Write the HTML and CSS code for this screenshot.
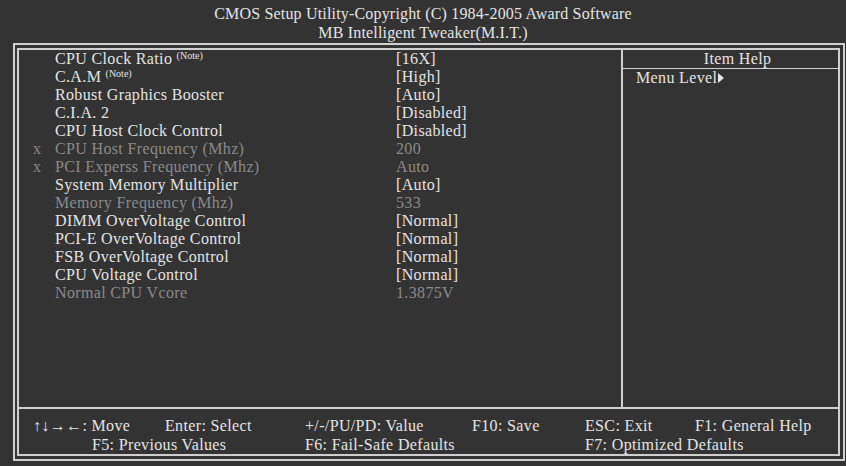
FILE: index.html
```html
<!DOCTYPE html>
<html>
<head>
<meta charset="utf-8">
<link rel="stylesheet" href="styles.css">
</head>
<body>
<div class="screen">
  <div class="header">
    <div>CMOS Setup Utility-Copyright (C) 1984-2005 Award Software</div>
    <div>MB Intelligent Tweaker(M.I.T.)</div>
  </div>
  <div class="outer">
    <div class="inner">
      <div class="main">
        <div class="items">
          <span class="mark"></span><span class="label">CPU Clock Ratio <sup>(Note)</sup></span><span class="value">[16X]</span>
          <span class="mark"></span><span class="label">C.A.M <sup>(Note)</sup></span><span class="value">[High]</span>
          <span class="mark"></span><span class="label">Robust Graphics Booster</span><span class="value">[Auto]</span>
          <span class="mark"></span><span class="label">C.I.A. 2</span><span class="value">[Disabled]</span>
          <span class="mark"></span><span class="label">CPU Host Clock Control</span><span class="value">[Disabled]</span>
          <span class="mark dim">x</span><span class="label dim">CPU Host Frequency (Mhz)</span><span class="value dim">200</span>
          <span class="mark dim">x</span><span class="label dim">PCI Experss Frequency (Mhz)</span><span class="value dim">Auto</span>
          <span class="mark"></span><span class="label">System Memory Multiplier</span><span class="value">[Auto]</span>
          <span class="mark"></span><span class="label dim">Memory Frequency (Mhz)</span><span class="value dim">533</span>
          <span class="mark"></span><span class="label">DIMM OverVoltage Control</span><span class="value">[Normal]</span>
          <span class="mark"></span><span class="label">PCI-E OverVoltage Control</span><span class="value">[Normal]</span>
          <span class="mark"></span><span class="label">FSB OverVoltage Control</span><span class="value">[Normal]</span>
          <span class="mark"></span><span class="label">CPU Voltage Control</span><span class="value">[Normal]</span>
          <span class="mark"></span><span class="label dim">Normal CPU Vcore</span><span class="value dim">1.3875V</span>
        </div>
        <div class="help">
          <div class="help-title">Item Help</div>
          <div class="help-body">Menu Level<svg class="tri" width="6" height="10" viewBox="0 0 6 10"><path d="M0 0 L6 5 L0 10 Z" fill="#e4e4e4"/></svg></div>
        </div>
      </div>
      <div class="footer">
        <span>↑↓→←: Move</span>
        <span>Enter: Select</span>
        <span>+/-/PU/PD: Value</span>
        <span>F10: Save</span>
        <span>ESC: Exit</span>
        <span>F1: General Help</span>
        <span class="f5">F5: Previous Values</span>
        <span class="f6">F6: Fail-Safe Defaults</span>
        <span class="f7">F7: Optimized Defaults</span>
      </div>
    </div>
  </div>
</div>
</body>
</html>
```

FILE: styles.css
```css
html, body {
  margin: 0;
  padding: 0;
  background: #333333;
}
body {
  width: 846px;
  height: 466px;
  overflow: hidden;
  font-family: "Liberation Serif", "Times New Roman", serif;
  font-size: 16px;
  letter-spacing: 0.35px;
  color: #e4e4e4;
}
.screen {
  padding-top: 4px;
}
.header {
  height: 39px;
  text-align: center;
  line-height: 19px;
  letter-spacing: 0.18px;
}
.outer {
  margin-left: 13px;
  width: 832px;
  height: 418px;
  box-sizing: border-box;
  border: 2px solid #cfcfcf;
  padding: 3px 3px 3px 2px;
}
.inner {
  height: 100%;
  box-sizing: border-box;
  border: 2px solid #cfcfcf;
  display: flex;
  flex-direction: column;
}
.main {
  height: 358px;
  display: flex;
}
.items {
  width: 604px;
  display: grid;
  grid-template-columns: 22px 341px auto;
  grid-auto-rows: 18px;
  align-content: start;
  padding-left: 14px;
  box-sizing: border-box;
  line-height: 18px;
  border-right: 2px solid #cfcfcf;
}
.label sup {
  font-size: 10px;
  letter-spacing: 0;
  vertical-align: 5px;
  line-height: 0;
}
.dim {
  color: #8a8a8a;
}
.help {
  flex: 1;
  display: flex;
  flex-direction: column;
}
.help-title {
  height: 18px;
  line-height: 18px;
  text-align: center;
  padding-left: 14px;
  border-bottom: 1px solid #cfcfcf;
}
.help-body {
  padding-left: 13px;
  line-height: 18px;
  display: flex;
  align-items: center;
}
.tri {
  margin-left: 1px;
}
.footer {
  flex: 1;
  border-top: 2px solid #cfcfcf;
  display: grid;
  grid-template-columns: 132px 140px 167px 113px 110px auto;
  grid-auto-rows: 19px;
  line-height: 19px;
  padding-top: 7px;
  padding-left: 14px;
  align-content: start;
}
.f5 {
  grid-column: 1 / 3;
  padding-left: 59px;
}
.f6 {
  grid-column: 3 / 5;
}
.f7 {
  grid-column: 5 / 7;
}
```
